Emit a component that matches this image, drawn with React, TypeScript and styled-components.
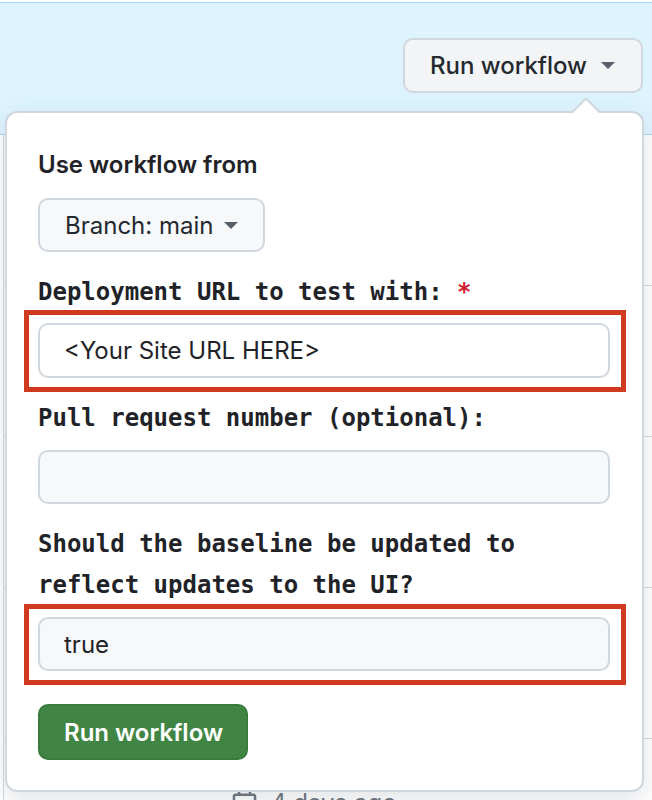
import styled, { createGlobalStyle } from "styled-components";

const GlobalStyle = createGlobalStyle`
  html, body {
    margin: 0;
    padding: 0;
    background: #ffffff;
  }
  body {
    font-family: Inter, "Liberation Sans", sans-serif;
    color: #1f2328;
    overflow: hidden;
  }
`;

const Page = styled.div`
  width: 652px;
  height: 800px;
  overflow: hidden;
  display: flex;
  flex-direction: column;
`;

const Flash = styled.div`
  flex-shrink: 0;
  margin-top: 2px;
  height: 133px;
  box-sizing: border-box;
  background: #ddf4ff;
  border-top: 1px solid #a8d5fb;
  border-bottom: 1px solid #a8d5fb;
  display: flex;
  justify-content: flex-end;
  align-items: flex-start;
  padding: 35px 9px 0 0;
`;

const MenuWrap = styled.div`
  position: relative;
`;

const Caret = styled.span`
  display: inline-block;
  width: 0;
  height: 0;
  border-left: 7px solid transparent;
  border-right: 7px solid transparent;
  border-top: 7px solid #57606a;
`;

const Button = styled.button<{ $primary?: boolean }>`
  display: inline-flex;
  align-items: center;
  gap: 14px;
  box-sizing: border-box;
  height: ${(p) => (p.$primary ? "56px" : "55px")};
  padding: ${(p) => (p.$primary ? "0 23px 0 24px" : "0 26px 0 25px")};
  border-radius: 10px;
  border: 2px solid ${(p) => (p.$primary ? "#3a7a3e" : "#d0d7de")};
  background: ${(p) => (p.$primary ? "#418544" : "#f3f4f6")};
  color: ${(p) => (p.$primary ? "#ffffff" : "#24292f")};
  font-family: Inter, "Liberation Sans", sans-serif;
  font-size: 24px;
  font-weight: ${(p) => (p.$primary ? 600 : 500)};
  cursor: pointer;
`;

const BranchButton = styled(Button)`
  height: 54px;
  gap: 11px;
  padding: 0 25px 0 25px;
  background: #f6f8fa;
  font-weight: 400;
`;

const Popover = styled.div`
  position: absolute;
  top: 73px;
  right: -1px;
  width: 639px;
  box-sizing: border-box;
  background: #ffffff;
  border: 2px solid #d0d7de;
  border-radius: 12px;
  box-shadow: 0 8px 24px rgba(140, 149, 159, 0.25);
  padding: 34px 32px 30px 31px;
  display: flex;
  flex-direction: column;
  align-items: flex-start;

  &::before,
  &::after {
    content: "";
    position: absolute;
    right: 42px;
    width: 0;
    height: 0;
    border-left: 14px solid transparent;
    border-right: 14px solid transparent;
  }
  &::before {
    top: -16px;
    border-bottom: 14px solid #d0d7de;
  }
  &::after {
    top: -13px;
    right: 43px;
    border-left-width: 13px;
    border-right-width: 13px;
    border-bottom: 13px solid #ffffff;
  }
`;

const Title = styled.div`
  font-size: 24px;
  font-weight: 600;
  line-height: 36px;
`;

const Label = styled.label<{ $gap: number; $lh?: number }>`
  display: block;
  margin-top: ${(p) => p.$gap}px;
  font-family: "DejaVu Sans Mono", "Liberation Mono", monospace;
  font-weight: 700;
  font-size: 24px;
  line-height: ${(p) => p.$lh ?? 30}px;
`;

const Required = styled.span`
  color: #cf222e;
`;

const Highlight = styled.div<{ $gap: number }>`
  align-self: stretch;
  margin: ${(p) => p.$gap}px -16px 0 -14px;
  border: 5px solid #d03a1e;
  padding: 8px 11px 9px 9px;
`;

const Field = styled.input<{ $filled?: boolean; $gap?: number; $h?: number }>`
  display: block;
  width: 100%;
  box-sizing: border-box;
  height: ${(p) => p.$h ?? 55}px;
  margin-top: ${(p) => p.$gap ?? 0}px;
  padding: 0 24px;
  border: 2px solid #d0d7de;
  border-radius: 10px;
  background: ${(p) => (p.$filled ? "#ffffff" : "#f6f8fa")};
  font-family: Inter, "Liberation Sans", sans-serif;
  font-size: 24px;
  color: #1f2328;
  outline: none;
`;

const Table = styled.div`
  flex-shrink: 0;
  margin-left: 3px;
  border-left: 1px solid #d0d7de;
  display: flex;
  flex-direction: column;
`;

const Row = styled.div`
  flex-shrink: 0;
  height: 151px;
  box-sizing: border-box;
  border-bottom: 1px solid #d0d7de;
  padding: 50px 0 0 227px;
`;

const DateMeta = styled.div`
  display: flex;
  align-items: center;
  gap: 13px;
  color: #656d76;
  font-size: 24px;
  line-height: 28px;
`;

function CalendarIcon() {
  return (
    <svg width="27" height="27" viewBox="0 0 16 16" fill="#656d76">
      <path d="M4.75 0a.75.75 0 0 1 .75.75V2h5V.75a.75.75 0 0 1 1.5 0V2h1.25c.966 0 1.75.784 1.75 1.75v10.5A1.75 1.75 0 0 1 13.25 16H2.75A1.75 1.75 0 0 1 1 14.25V3.75C1 2.784 1.784 2 2.75 2H4V.75A.75.75 0 0 1 4.75 0ZM2.5 7.5v6.75c0 .138.112.25.25.25h10.5a.25.25 0 0 0 .25-.25V7.5Zm10.75-4H2.75a.25.25 0 0 0-.25.25V6h11V3.75a.25.25 0 0 0-.25-.25Z" />
    </svg>
  );
}

export default function App() {
  const rows = ["4 days ago", "4 days ago", "4 days ago", "4 days ago", "4 days ago"];

  return (
    <Page>
      <GlobalStyle />
      <Flash>
        <MenuWrap>
          <Button>
            Run workflow <Caret />
          </Button>
          <Popover>
            <Title>Use workflow from</Title>
            <BranchButton style={{ marginTop: 15 }}>
              Branch: main <Caret />
            </BranchButton>

            <Label $gap={25}>
              Deployment URL to test with: <Required>*</Required>
            </Label>
            <Highlight $gap={3}>
              <Field $filled readOnly value="<Your Site URL HERE>" />
            </Highlight>

            <Label $gap={11}>Pull request number (optional):</Label>
            <Field $gap={17} $h={54} readOnly value="" />

            <Label $gap={20} $lh={41}>
              Should the baseline be updated to reflect updates to the UI?
            </Label>
            <Highlight $gap={-2}>
              <Field $h={54} readOnly value="true" />
            </Highlight>

            <Button $primary style={{ marginTop: 19 }}>
              Run workflow
            </Button>
          </Popover>
        </MenuWrap>
      </Flash>
      <Table>
        {rows.map((d, i) => (
          <Row key={i}>
            <DateMeta>
              <CalendarIcon />
              {d}
            </DateMeta>
          </Row>
        ))}
      </Table>
    </Page>
  );
}
